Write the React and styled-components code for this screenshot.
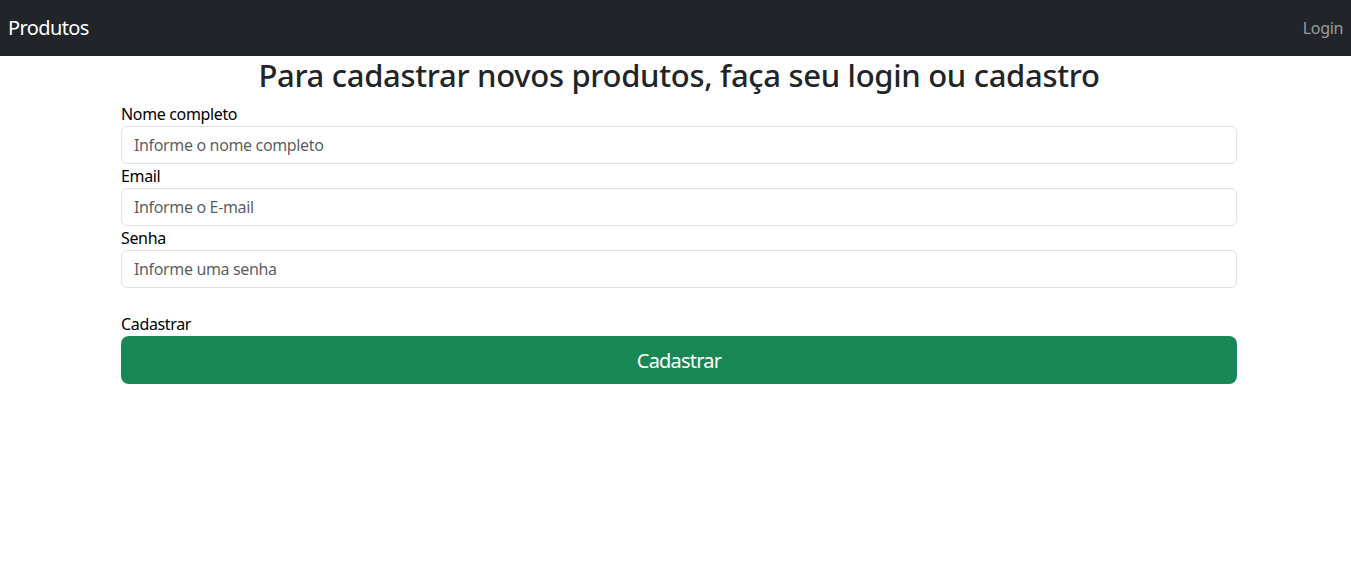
import styled, { createGlobalStyle } from 'styled-components';

const GlobalStyle = createGlobalStyle`
  * {
    box-sizing: border-box;
  }
  body {
    margin: 0;
    background: #fff;
    color: #212529;
    font-family: "Noto Sans", "Open Sans", sans-serif;
    font-size: 16px;
    line-height: 1.5;
    letter-spacing: -0.35px;
  }
`;

const Navbar = styled.nav`
  display: flex;
  align-items: center;
  justify-content: space-between;
  height: 56px;
  padding: 0 8px;
  background-color: #212529;
`;

const Brand = styled.a`
  color: #fff;
  font-size: 20px;
  letter-spacing: -0.6px;
  text-decoration: none;
`;

const NavLink = styled.a`
  color: rgba(255, 255, 255, 0.55);
  font-size: 16px;
  text-decoration: none;
`;

const Page = styled.main`
  padding-left: 7px;
`;

const Container = styled.div`
  width: 1116px;
  margin: 0 auto;
`;

const Title = styled.h2`
  margin: 0 0 8px;
  font-size: 31px;
  font-weight: 500;
  line-height: 38px;
  letter-spacing: -0.3px;
  text-align: center;
`;

const Form = styled.form`
  display: flex;
  flex-direction: column;
`;

const Label = styled.label`
  display: block;
  color: #000;
  font-size: 16px;
  line-height: 24px;
  margin-top: ${(p) => (p.$spaced ? '24px' : '0')};
`;

const Input = styled.input`
  width: 100%;
  height: 38px;
  padding: 6px 12px;
  font-family: inherit;
  font-size: 16px;
  letter-spacing: -0.35px;
  color: #212529;
  border: 1px solid #dee2e6;
  border-radius: 6px;
  outline: none;
  &::placeholder {
    color: rgba(33, 37, 41, 0.75);
  }
`;

const SubmitButton = styled.button`
  width: 100%;
  height: 48px;
  border: none;
  border-radius: 8px;
  background-color: #198754;
  color: #fff;
  font-family: inherit;
  font-size: 20px;
  letter-spacing: -0.8px;
  cursor: pointer;
`;

const App = () => {
  return (
    <>
      <GlobalStyle />
      <Navbar>
        <Brand href="#">Produtos</Brand>
        <NavLink href="#">Login</NavLink>
      </Navbar>
      <Page>
        <Container>
          <Title>Para cadastrar novos produtos, faça seu login ou cadastro</Title>
          <Form onSubmit={(e) => e.preventDefault()}>
            <Label htmlFor="nome">Nome completo</Label>
            <Input id="nome" type="text" placeholder="Informe o nome completo" />
            <Label htmlFor="email">Email</Label>
            <Input id="email" type="email" placeholder="Informe o E-mail" />
            <Label htmlFor="senha">Senha</Label>
            <Input id="senha" type="password" placeholder="Informe uma senha" />
            <Label htmlFor="cadastrar" $spaced>
              Cadastrar
            </Label>
            <SubmitButton id="cadastrar" type="submit">
              Cadastrar
            </SubmitButton>
          </Form>
        </Container>
      </Page>
    </>
  );
};

export default App;
